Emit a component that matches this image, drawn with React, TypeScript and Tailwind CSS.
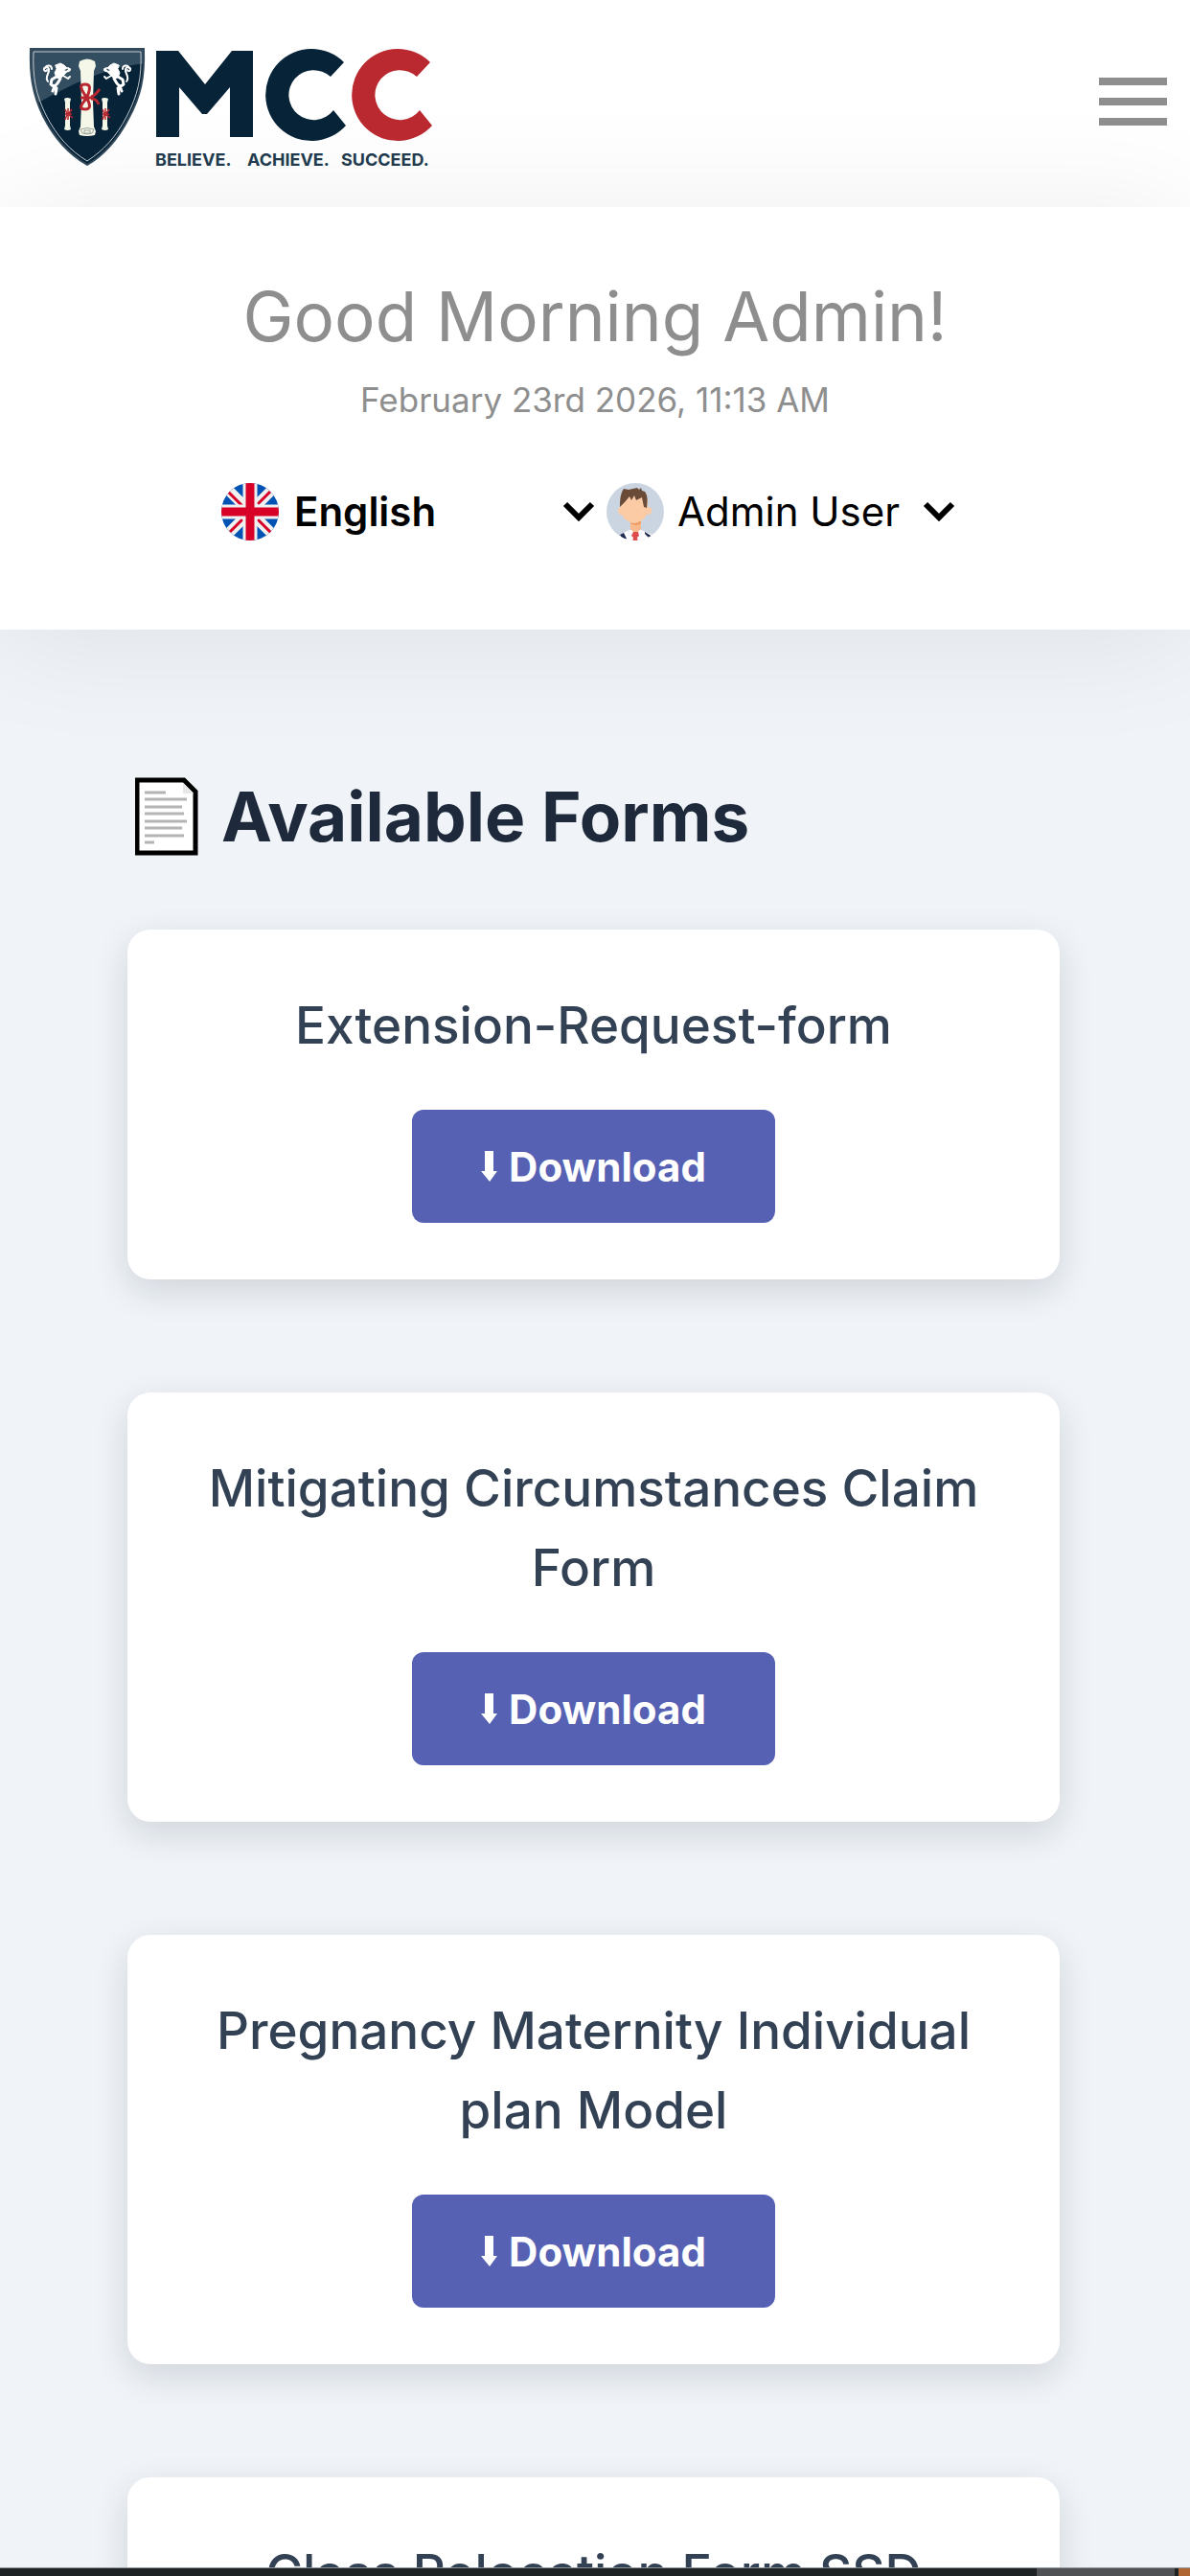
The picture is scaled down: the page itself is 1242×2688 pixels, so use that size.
const forms = [
  'Extension-Request-form',
  'Mitigating Circumstances Claim Form',
  'Pregnancy Maternity Individual plan Model',
  'Class Relocation Form SSD',
];

function Lion() {
  return (
    <g fill="none" stroke="#fff" strokeLinecap="round" strokeLinejoin="round">
      <path d="M28 19l5-2 4 2 3 3-3 2 1 4-5 5-4-1-2-5 2-4z" fill="#fff" strokeWidth="1" />
      <path d="M36 26l6-1M41 22l2 2M36 30l5 3 2-2M38 27l5-4" strokeWidth="2" />
      <path d="M29 31l-5 3-1 5 5 3M33 33l-3 5-3 3-2 5M24 40l4 2M29 43l-1 6" strokeWidth="3" />
      <path d="M20 36c-4-5 2-8 1-13-1-3-6-2-5 1 1 2 3 1 3 0M17 22c2-4 7-3 7 1" strokeWidth="2" />
    </g>
  );
}

function SmallScroll({ x }: { x: number }) {
  return (
    <g transform={`translate(${x} 0)`}>
      <path d="M0 54q3-2 7 0l-1 4v24l1 4q-3 2-7 0l1-4V58z" fill="#f5f8e8" />
      <path d="M1 65l2 5-2 6M4 64v12M1 70h7M5 69l3-4M5 71l4 3" stroke="#b8262f" strokeWidth="1.5" fill="none" />
    </g>
  );
}

function Logo() {
  return (
    <a href="#" aria-label="MCC home" className="block pt-4">
      <svg viewBox="0 0 430 134" className="h-[134px] w-[430px]" role="img" aria-label="MCC, Believe. Achieve. Succeed.">
        <defs>
          <clipPath id="shield">
            <path d="M2 2h118c1 30-3 49-16 73-12 23-26 38-43 48-19-11-34-27-46-51C4 49 1 29 2 2z" />
          </clipPath>
        </defs>
        <g clipPath="url(#shield)">
          <path d="M0 0h124v126H0z" fill="#062338" />
          <path d="M0 0h124v17C84 20 49 37 12 57L0 62z" fill="#344e61" />
        </g>
        <path d="M2 2h118c1 30-3 49-16 73-12 23-26 38-43 48-19-11-34-27-46-51C4 49 1 29 2 2z" fill="none" stroke="#32495a" strokeWidth="2" />
        <path d="M5 5h112c1 27-3 45-15 68-11 21-24 35-41 46-18-11-32-26-43-48C7 49 4 31 5 5z" fill="none" stroke="#c1c9cf" strokeWidth="1" />
        <Lion />
        <g transform="translate(122 0) scale(-1 1)"><Lion /></g>
        <path d="M53 15q8-5 16 0l1 5-2 5-1 32 1 26 2 5-1 4q-8 2-16 0l-1-4 2-5 1-26-1-32-2-5z" fill="#f5f8e8" />
        <path d="M54 86q7-3 14 0l-2 4q-5 2-10 0zM58 87h6v3h-6z" fill="none" stroke="#9ba49e" strokeWidth="1" />
        <path d="M54 53h13M65 52c4-1 6-4 9-8M65 54c5 0 7 3 8 6M60 52c-8-11-6-13-1-13s6 3 2 13M60 54c-8 9-6 11-1 11s6-3 2-11" fill="none" stroke="#b8262f" strokeWidth="3" />
        <SmallScroll x={37} />
        <SmallScroll x={76} />
        <path d="M133 4h23l28 35 28-35h22v90h-24V42l-24 28h-5l-24-28v52h-24z" fill="#062338" />
        <path d="M329 16A48 48 0 1 0 331 82L318 66A26 26 0 1 1 315 31z" fill="#062338" />
        <path d="M419 16A48 48 0 1 0 421 82L408 66A26 26 0 1 1 405 31z" fill="#ba2830" />
        <g fill="#213a4d" fontFamily="Inter, sans-serif" fontSize="18" fontWeight="700">
          <text x="132" y="124">BELIEVE.</text>
          <text x="228" y="124">ACHIEVE.</text>
          <text x="326" y="124">SUCCEED.</text>
        </g>
      </svg>
    </a>
  );
}

function Flag() {
  return (
    <svg viewBox="0 0 60 60" className="size-[60px] shrink-0" aria-hidden="true">
      <defs><clipPath id="flag"><circle cx="30" cy="30" r="30" /></clipPath></defs>
      <g clipPath="url(#flag)">
        <path d="M0 0h60v60H0z" fill="#0052b4" />
        <path d="M0 0l60 60M60 0L0 60" stroke="#f0f0f0" strokeWidth="11" />
        <path d="M7 9l15 15M38 22L51 9M22 38L9 51M38 38l14 14" stroke="#d80027" strokeWidth="3" />
        <path d="M30 0v60M0 30h60" stroke="#f0f0f0" strokeWidth="15" />
        <path d="M30 0v60M0 30h60" stroke="#d80027" strokeWidth="9" />
      </g>
    </svg>
  );
}

function Avatar() {
  return (
    <svg viewBox="0 0 60 60" className="size-[60px] shrink-0" aria-hidden="true">
      <defs><clipPath id="avatar"><circle cx="30" cy="30" r="30" /></clipPath></defs>
      <g clipPath="url(#avatar)">
        <path d="M0 0h60v60H0z" fill="#cbd5e1" />
        <path d="M14 54l10-5h12l12 5v8H14z" fill="#fff" />
        <path d="M14 54l4-2 3 6-3 3zM40 51l8 5-3 2-5-5z" fill="#202a52" />
        <path d="M25 37h11v11l-6 5-5-5z" fill="#f8b98c" />
        <path d="M25 42q6 4 11 0v-2H25z" fill="#ef9b60" />
        <ellipse cx="15" cy="29" rx="3" ry="4" fill="#fbcba5" />
        <ellipse cx="44" cy="29" rx="3" ry="4" fill="#fbcba5" />
        <path d="M15 17q14-12 28 0v13c0 5-8 12-14 12s-14-7-14-12z" fill="#fbcba5" />
        <path d="M14 25c0-9 1-15 4-19l5 1 9-2 2 2 2-2 1 3 3 1c3 4 3 9 2 17l-3-1-2-10-6 3-2-5-3 5-2-4-5 6-3 3z" fill="#694b38" />
        <path d="M24 49l6 4-6 5-3-5zM36 49l-6 4 6 5 3-5z" fill="#f7f8fc" />
        <path d="M28 51h5l1 4-2 2 1 5h-6l1-5-2-2z" fill="#df4c4c" />
      </g>
    </svg>
  );
}

function Chevron() {
  return (
    <svg viewBox="0 0 34 22" className="h-[22px] w-[34px] shrink-0" aria-hidden="true">
      <path d="M3 3l14 14L31 3" fill="none" stroke="#000" strokeWidth="6" />
    </svg>
  );
}

function DocumentIcon() {
  return (
    <svg viewBox="0 0 66 82" className="h-[82px] w-[66px] shrink-0" aria-hidden="true">
      <path d="M2 3h49l12 12v64H2z" fill="#fff" stroke="#000" strokeWidth="5" />
      <path d="M50 6v11h11z" fill="#e8e8e8" />
      <path d="M10 16h22M10 23h44M10 31h39M10 38h41M10 46h44M10 53h39M10 61h41M10 68h10" stroke="#b4b4b4" strokeWidth="3" />
    </svg>
  );
}

function FormCard({ title }: { title: string }) {
  return (
    <li className="flex flex-col items-center rounded-3xl bg-white px-16 pt-[59px] pb-[59px] text-center shadow-[0_12px_36px_rgba(15,23,42,0.14)]">
      <h2 className="text-[53px] leading-[83px] font-medium text-[#334155]">{title}</h2>
      <button type="button" className="mt-[46px] flex h-[118px] items-center gap-3 rounded-xl bg-[#5661b3] px-[72px] text-[42px] font-bold text-white">
        <svg viewBox="0 0 17 34" className="h-[34px] w-[17px]" aria-hidden="true"><path d="M4 1h9v21h4L9 33 0 22h4z" fill="currentColor" /></svg>
        Download
      </button>
    </li>
  );
}

export default function App() {
  return (
    <div className="relative h-screen overflow-hidden bg-[#f0f4f8] font-['Inter',sans-serif]">
      <header className="flex h-[216px] items-center justify-between bg-white pr-6 pl-[30px]">
        <Logo />
        <button type="button" aria-label="Open menu" className="mb-1 flex w-[71px] flex-col gap-[13px]">
          <span className="h-2 bg-[#8e8e8e]" />
          <span className="h-2 bg-[#8e8e8e]" />
          <span className="h-2 bg-[#8e8e8e]" />
        </button>
      </header>
      <section className="flex h-[441px] flex-col items-center bg-white pt-[66px] text-[#8e8e8e] shadow-[0_8px_120px_rgba(0,0,0,0.08)]">
        <h1 className="text-[71px] leading-[96px]">Good Morning Admin!</h1>
        <p className="mt-3 text-[35px] leading-[54px]">February 23rd 2026, 11:13 AM</p>
        <div className="mt-[60px] flex items-center pr-3.5 text-[42px] leading-[60px] text-black">
          <button type="button" className="flex w-[390px] items-center font-semibold">
            <Flag />
            <span className="mr-auto ml-4">English</span>
            <Chevron />
          </button>
          <button type="button" className="ml-3 flex items-center">
            <Avatar />
            <span className="mr-6 ml-3.5">Admin User</span>
            <Chevron />
          </button>
        </div>
      </section>
      <main className="pt-[150px] pr-[136px] pl-[133px]">
        <h2 className="flex items-center gap-6 pl-2 text-[71px] leading-[90px] font-bold text-[#1e293b]">
          <DocumentIcon />
          Available Forms
        </h2>
        <ul className="mt-[73px] flex flex-col gap-[118px]">
          {forms.map((title) => <FormCard key={title} title={title} />)}
        </ul>
      </main>
      <div className="absolute inset-x-0 bottom-0 flex h-[9px] border-t border-[#8b9298] bg-[#1f2225]">
        <span className="ml-auto w-[144px] bg-[#505154]" />
        <span className="ml-1 w-[12px] bg-[#b06633]" />
      </div>
    </div>
  );
}
